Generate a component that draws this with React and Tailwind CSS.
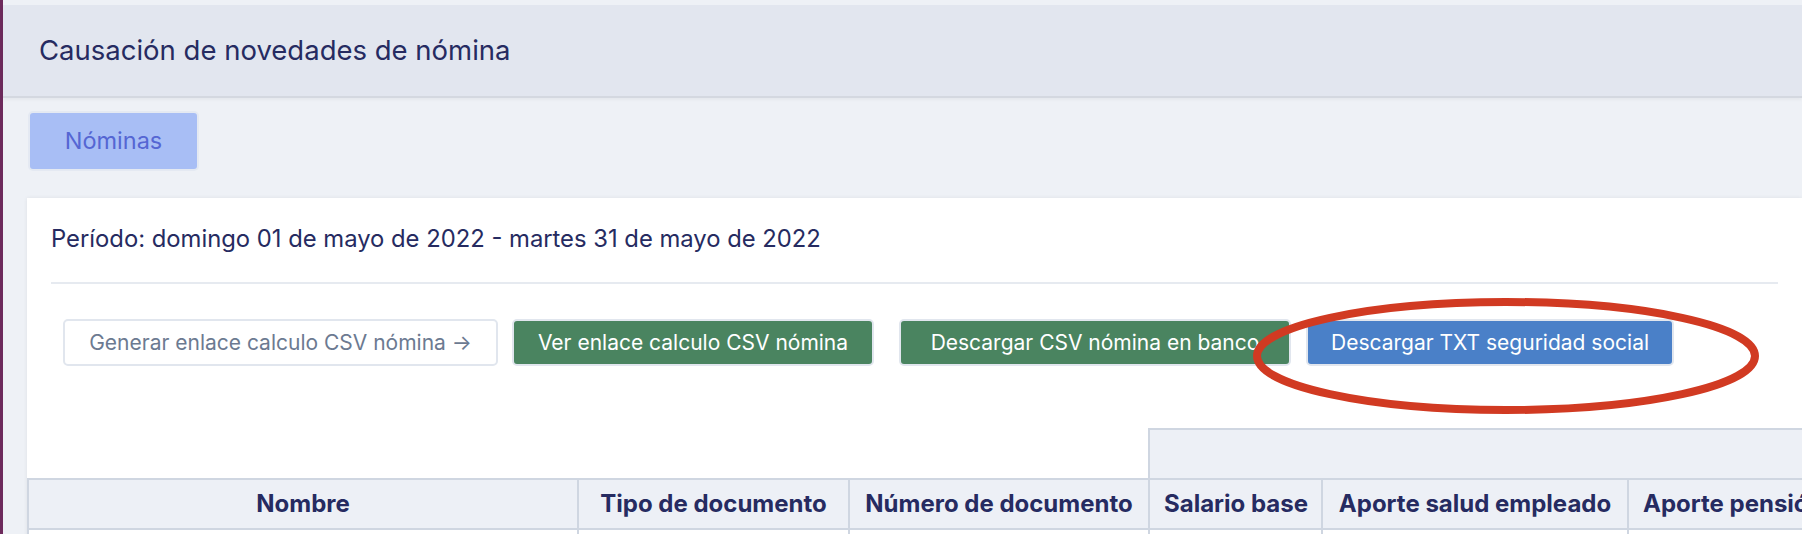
export default function App() {
  const columns = [
    { label: 'Nombre', width: 'w-[550px]' },
    { label: 'Tipo de documento', width: 'w-[271px]' },
    { label: 'Número de documento', width: 'w-[300px]' },
    { label: 'Salario base', width: 'w-[173px]' },
    { label: 'Aporte salud empleado', width: 'w-[306px]' },
    { label: 'Aporte pensión empleado', width: 'w-[330px]' },
  ];

  return (
    <div className="relative flex min-h-[534px] w-full overflow-hidden bg-[#eef1f6] font-['Inter',sans-serif] text-[#262b61]">
      {/* barra lateral */}
      <div className="w-[3px] shrink-0 bg-[#6d2a5c]" />

      <div className="flex min-w-0 flex-1 flex-col pt-[5px]">
        <header className="flex h-[93px] items-center border-b-2 border-[#d4d8e0] bg-[#e2e6ef] pl-[36px] shadow-[0_2px_3px_rgba(0,0,0,0.04)]">
          <h1 className="text-[27.5px] leading-none">Causación de novedades de nómina</h1>
        </header>

        <div className="pl-[25px] pt-[13px]">
          <button className="h-[60px] w-[171px] rounded-[5px] border-2 border-[#e4e9f2] bg-[#a8bef5] text-[23.5px] text-[#5566d3]">
            Nóminas
          </button>
        </div>

        <section className="ml-[24px] mt-[27px] flex-1 overflow-hidden bg-white shadow-[0_0_4px_rgba(0,0,0,0.07)]">
          <div className="px-[24px] pt-[26px]">
            <p className="text-[23.8px] leading-[30px]">
              Período: domingo 01 de mayo de 2022 - martes 31 de mayo de 2022
            </p>
            <div className="mt-[28px] h-[2px] bg-[#e6eaf0]" />
          </div>

          <div className="flex pl-[36px] pt-[35px]">
            <button className="h-[47px] w-[435px] shrink-0 rounded-[5px] border-2 border-[#e1e6ee] bg-white text-[21px] text-[#6c7a91]">
              Generar enlace calculo CSV nómina →
            </button>
            <button className="ml-[14px] h-[47px] w-[362px] shrink-0 rounded-[5px] border-2 border-[#e1e6ee] bg-[#4a8460] text-[21px] text-white">
              Ver enlace calculo CSV nómina
            </button>
            <button className="ml-[25px] h-[47px] w-[392px] shrink-0 rounded-[5px] border-2 border-[#e1e6ee] bg-[#4a8460] text-[21px] text-white">
              Descargar CSV nómina en banco
            </button>
            <button className="ml-[15px] h-[47px] w-[368px] shrink-0 rounded-[5px] border-2 border-[#e1e6ee] bg-[#4a80c8] text-[21px] text-white">
              Descargar TXT seguridad social
            </button>
          </div>

          <table className="mt-[62px] w-[1930px] table-fixed border-collapse text-[24px]">
            <colgroup>
              {columns.map((c) => (
                <col key={c.label} className={c.width} />
              ))}
            </colgroup>
            <thead>
              <tr className="h-[50px]">
                <th colSpan={3} className="border-0 bg-white" />
                <th colSpan={3} className="border-2 border-r-0 border-[#cfd6e1] bg-[#edf0f6]" />
              </tr>
              <tr className="h-[50px]">
                {columns.map((c) => (
                  <th
                    key={c.label}
                    className="overflow-hidden whitespace-nowrap border-2 border-[#cfd6e1] bg-[#edf0f6] px-[14px] text-center font-bold"
                  >
                    {c.label}
                  </th>
                ))}
              </tr>
            </thead>
            <tbody>
              <tr className="h-[40px]">
                {columns.map((c) => (
                  <td key={c.label} className="border-2 border-[#cfd6e1]" />
                ))}
              </tr>
            </tbody>
          </table>
        </section>
      </div>

      {/* anotación */}
      <svg
        className="pointer-events-none absolute left-[1248px] top-[294px]"
        width="516"
        height="124"
        viewBox="0 0 516 124"
      >
        <ellipse cx="258" cy="62" rx="249" ry="54" fill="none" stroke="#d13a22" strokeWidth="8" />
      </svg>
    </div>
  );
}
